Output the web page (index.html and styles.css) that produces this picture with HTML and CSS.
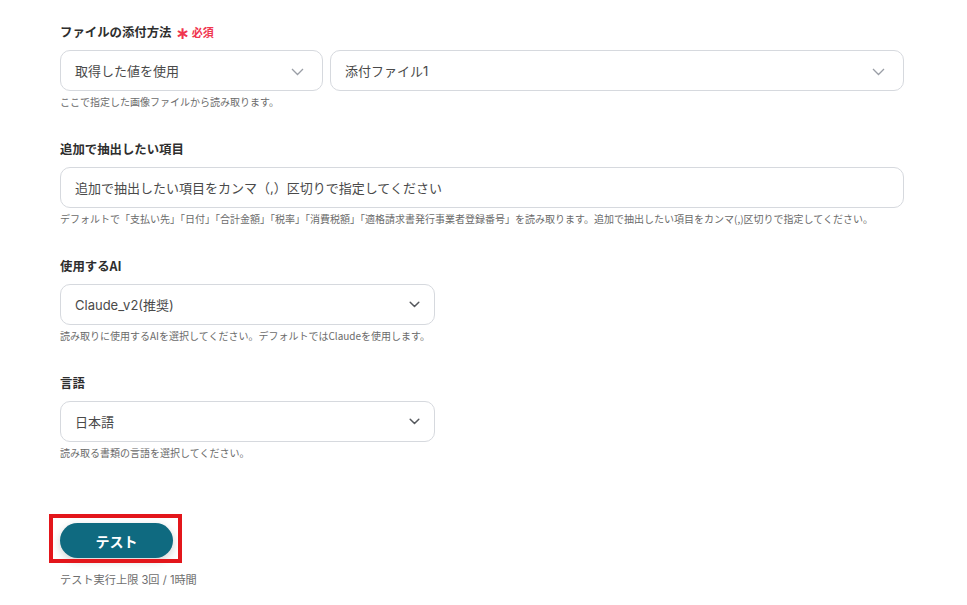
FILE: index.html
```html
<!DOCTYPE html>
<html lang="ja">
<head>
<meta charset="utf-8">
<link rel="stylesheet" href="styles.css">
</head>
<body>
<div class="form">
  <section class="field">
    <div class="label">ファイルの添付方法<span class="req"><span class="ast">∗</span>必須</span></div>
    <div class="row-two">
      <div class="select">
        <span>取得した値を使用</span>
        <svg class="chev light" width="13" height="8" viewBox="0 0 13 8"><path d="M1 1l5.5 5.5L12 1" fill="none" stroke="#9a9ea6" stroke-width="1.3"/></svg>
      </div>
      <div class="select">
        <span>添付ファイル1</span>
        <svg class="chev light" width="13" height="8" viewBox="0 0 13 8"><path d="M1 1l5.5 5.5L12 1" fill="none" stroke="#9a9ea6" stroke-width="1.3"/></svg>
      </div>
    </div>
    <div class="help">ここで指定した画像ファイルから読み取ります。</div>
  </section>

  <section class="field">
    <div class="label">追加で抽出したい項目</div>
    <div class="select full">
      <span>追加で抽出したい項目をカンマ（,）区切りで指定してください</span>
    </div>
    <div class="help">デフォルトで「支払い先」「日付」「合計金額」「税率」「消費税額」「適格請求書発行事業者登録番号」を読み取ります。追加で抽出したい項目をカンマ(,)区切りで指定してください。</div>
  </section>

  <section class="field">
    <div class="label">使用するAI</div>
    <div class="select narrow">
      <span>Claude_v2(推奨)</span>
      <svg class="chev" width="11" height="7" viewBox="0 0 11 7"><path d="M1.2 1.2L5.5 5.5l4.3-4.3" fill="none" stroke="#55585d" stroke-width="1.5" stroke-linecap="round" stroke-linejoin="round"/></svg>
    </div>
    <div class="help">読み取りに使用するAIを選択してください。デフォルトではClaudeを使用します。</div>
  </section>

  <section class="field">
    <div class="label">言語</div>
    <div class="select narrow">
      <span>日本語</span>
      <svg class="chev" width="11" height="7" viewBox="0 0 11 7"><path d="M1.2 1.2L5.5 5.5l4.3-4.3" fill="none" stroke="#55585d" stroke-width="1.5" stroke-linecap="round" stroke-linejoin="round"/></svg>
    </div>
    <div class="help">読み取る書類の言語を選択してください。</div>
  </section>

  <div class="test-area">
    <button class="test-btn">テスト</button>
    <div class="highlight"></div>
  </div>
  <div class="limit">テスト実行上限 3回 / 1時間</div>
</div>
</body>
</html>
```

FILE: styles.css
```css
html, body {
  margin: 0;
  padding: 0;
  background: #ffffff;
}
body {
  font-family: "Inter", "Noto Sans CJK JP", sans-serif;
  color: #333;
}
.form {
  padding: 23px 0 0 60px;
  width: 844px;
}
.field {
  margin-bottom: 31px;
}
.label {
  font-family: "Noto Sans CJK JP", sans-serif;
  font-size: 12.4px;
  font-weight: 700;
  line-height: 18px;
  color: #2e2e2e;
  margin-bottom: 9px;
  display: flex;
  align-items: center;
}
.req {
  color: #f0364f;
  font-size: 11px;
  font-weight: 700;
  margin-left: 4px;
  display: inline-flex;
  align-items: center;
}
.ast {
  font-family: "DejaVu Sans", sans-serif;
  font-size: 17px;
  margin-right: 2px;
  line-height: 1;
  position: relative;
  top: 1px;
}
.row-two {
  display: grid;
  grid-template-columns: 263px 1fr;
  gap: 7px;
}
.select {
  height: 41px;
  box-sizing: border-box;
  border: 1px solid #d6d9de;
  border-radius: 10px;
  display: flex;
  align-items: center;
  justify-content: space-between;
  padding: 0 18px 0 14px;
  font-size: 13px;
  color: #4a4a4a;
  background: #fff;
}
.select.full {
  width: 844px;
}
.select.narrow {
  width: 375px;
  padding-right: 14px;
}
.chev.light {
  margin-top: 2px;
}
.help {
  font-family: "Noto Sans CJK JP", sans-serif;
  font-size: 10px;
  line-height: 14px;
  color: #6b6b6b;
  margin-top: 4px;
  white-space: nowrap;
}
.test-area {
  position: relative;
  margin-top: 63px;
  height: 35px;
}
.test-btn {
  width: 113px;
  height: 35px;
  border: none;
  border-radius: 18px;
  background: #0f6a80;
  color: #fff;
  font-family: "Noto Sans CJK JP", sans-serif;
  font-size: 14px;
  font-weight: 700;
  box-shadow: 0 3px 8px rgba(0,0,0,0.18);
  padding: 0;
}
.highlight {
  position: absolute;
  left: -11px;
  top: -9px;
  width: 125px;
  height: 41px;
  border: 4px solid #e3161b;
}
.limit {
  margin-top: 15px;
  font-size: 11.2px;
  color: #6e6e6e;
  line-height: 14px;
}
```
